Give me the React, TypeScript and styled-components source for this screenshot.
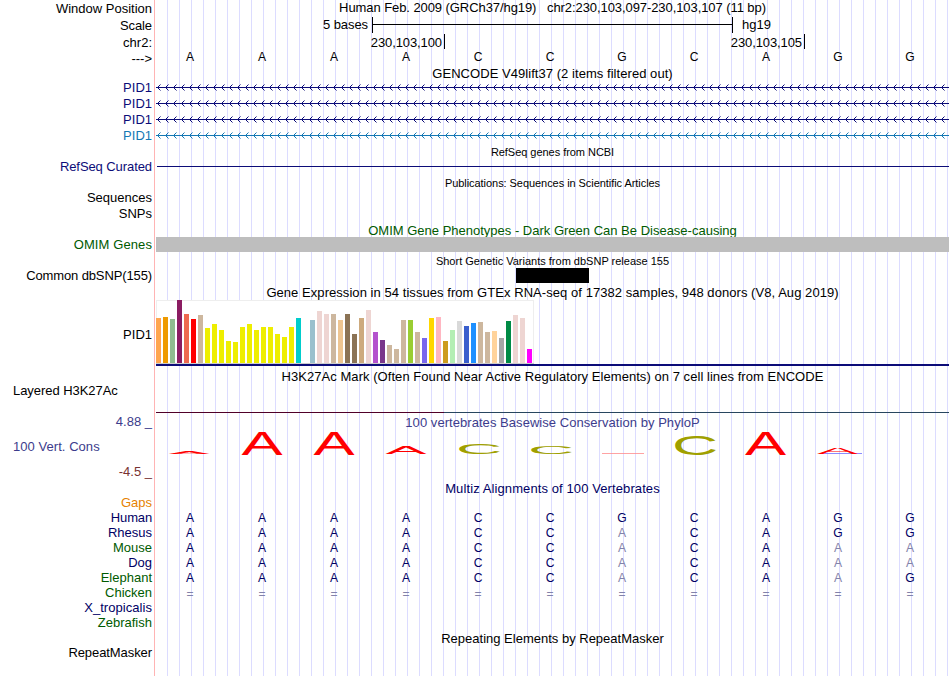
import type { ReactNode } from 'react';
import styled, { createGlobalStyle } from 'styled-components';

const NAVY = '#0c0c78';
const BASE = '#000064';
const GREEN = '#005a00';
const CONS = '#3c3c8c';

const GlobalStyle = createGlobalStyle`
  * {
    box-sizing: border-box;
  }
  body {
    margin: 0;
    background: #fff;
    overflow: hidden;
  }
`;

const Browser = styled.main`
  width: 950px;
  height: 676px;
  overflow: hidden;
  font: 13px/15px 'Liberation Sans', Arial, sans-serif;
  color: #000;
  white-space: pre;
  background:
    linear-gradient(#ffb4b4, #ffb4b4) 154px 0 / 1px 100% no-repeat,
    linear-gradient(#fff, #fff) 0 0 / 167px 100% no-repeat,
    linear-gradient(90deg, #dcdcff 1px, transparent 1px) 167px 0 / 12px 100%;
`;

const Row = styled.div<{ $height: number }>`
  display: grid;
  grid-template-columns: 152px 793px;
  column-gap: 4px;
  height: ${(p) => p.$height}px;
`;

const Label = styled.div<{ $color?: string; $top?: number; $left?: boolean; $spacing?: number }>`
  padding-top: ${(p) => p.$top ?? 0}px;
  padding-left: 13px;
  text-align: ${(p) => (p.$left ? 'left' : 'right')};
  color: ${(p) => p.$color ?? '#000'};
  letter-spacing: ${(p) => p.$spacing ?? 0}px;
`;

const Data = styled.div`
  min-width: 0;
`;

const Title = styled.div<{ $color?: string; $top?: number; $small?: boolean; $spacing?: number }>`
  padding-top: ${(p) => p.$top ?? 0}px;
  text-align: center;
  font-size: ${(p) => (p.$small ? 11 : 13)}px;
  color: ${(p) => p.$color ?? '#000'};
  letter-spacing: ${(p) => p.$spacing ?? 0}px;
`;

const ScaleBar = styled.div`
  display: grid;
  grid-template-columns: 212px 361px auto;
  column-gap: 4px;
  & > :first-child {
    text-align: right;
    letter-spacing: -0.08px;
  }
  & > :last-child {
    padding-left: 5px;
  }
`;

const Ruler = styled.div`
  height: 16px;
  border: solid #000;
  border-width: 0 1px;
  background: linear-gradient(#000, #000) 0 7px / 100% 1px no-repeat;
`;

const Coordinates = styled.div`
  display: grid;
  grid-template-columns: 289px 360px;
`;

const Coordinate = styled.div`
  height: 15px;
  padding: 1px 2px 0 0;
  border-right: 1px solid #000;
  text-align: right;
  letter-spacing: -0.1px;
`;

const Bases = styled.div<{ $top?: number }>`
  display: grid;
  grid-template-columns: repeat(11, 72.05px);
  margin-left: -2px;
  padding-top: ${(p) => p.$top ?? 0}px;
  text-align: center;
`;

const Base = styled.span<{ $color: string }>`
  color: ${(p) => p.$color};
  transform: scaleX(0.93);
`;

const Strand = styled.svg`
  display: block;
  width: 793px;
  height: 15px;
`;

const GeneLine = styled.div`
  height: 1px;
  margin: 7px 0 0 1px;
  background: ${NAVY};
`;

const OmimBar = styled.div`
  height: 15px;
  background: #bebebe;
`;

const Variant = styled.div`
  width: 73px;
  height: 15px;
  margin-left: 360px;
  background: #000;
`;

const Expression = styled.div`
  height: 66px;
  border-bottom: 2px solid ${NAVY};
`;

const Tissues = styled.div`
  display: flex;
  align-items: flex-end;
  gap: 2px;
  width: 378px;
  height: 64px;
  background: #fff;
  box-shadow: inset 0 1px #eee, inset -1px 0 #eee, inset 1px 0 #eee;
  border-bottom: 1px solid #ccc;
`;

const Tissue = styled.div<{ $height: number; $color: string }>`
  width: 5px;
  height: ${(p) => p.$height}px;
  background: ${(p) => p.$color};
`;

const HistoneLine = styled.div`
  height: 1px;
  margin-top: 29px;
  background: linear-gradient(90deg, #500028 288px, #28465f 288px);
`;

const Logo = styled.svg`
  display: block;
  width: 72px;
  height: 30px;
  overflow: visible;
`;

const tissues: [number, string][] = [
  [45, '#ffa54f'],
  [46, '#ee9a00'],
  [44, '#8fbc8f'],
  [63, '#8b1c62'],
  [49, '#ee6a50'],
  [44, '#ff0000'],
  [48, '#cdb79e'],
  ...[35, 39, 33, 22, 21, 36, 39, 33, 36, 36, 29, 26, 36].map(
    (height): [number, string] => [height, '#eeee00'],
  ),
  [45, '#00cdcd'],
  [0, '#ee82ee'],
  [43, '#9ac0cd'],
  [52, '#eed5d2'],
  [49, '#eed5d2'],
  [49, '#cdb79e'],
  [43, '#eec591'],
  [49, '#8b7355'],
  [29, '#8b7355'],
  [45, '#cdaa7d'],
  [53, '#eed5d2'],
  [31, '#b452cd'],
  [23, '#7a378b'],
  [18, '#cdb79e'],
  [14, '#cdb79e'],
  [43, '#cdb79e'],
  [43, '#9acd32'],
  [31, '#cdb79e'],
  [25, '#7a67ee'],
  [45, '#ffd700'],
  [46, '#ffb6c1'],
  [22, '#cd9b1d'],
  [33, '#b4eeb4'],
  [42, '#d9d9d9'],
  [37, '#3a5fcd'],
  [40, '#1e90ff'],
  [41, '#cdb79e'],
  [31, '#cdb79e'],
  [32, '#ffd39b'],
  [25, '#a6a6a6'],
  [42, '#008b45'],
  [48, '#eed5d2'],
  [45, '#eed5d2'],
  [14, '#ff00ff'],
];

// x is the centre inside the 72px base column, height is in pixels
const logos = [
  { letter: 'A', x: 35, height: 3, bottom: 23 },
  { letter: 'A', x: 36, height: 23, bottom: 24 },
  { letter: 'A', x: 36, height: 23, bottom: 24 },
  { letter: 'A', x: 36, height: 8, bottom: 23 },
  { letter: 'C', x: 37, height: 11, bottom: 23 },
  { letter: 'C', x: 37, height: 8, bottom: 23 },
  { letter: '', x: 36, height: 0, bottom: 23, line: '#ff8c8c', lineX: 16 },
  { letter: 'C', x: 37, height: 19, bottom: 24 },
  { letter: 'A', x: 35.5, height: 23, bottom: 24 },
  { letter: 'A', x: 35.5, height: 6, bottom: 23, line: '#6e6eff', lineX: 18 },
  { letter: '', x: 36, height: 0, bottom: 23 },
];

const HUMAN = 'AAAACCGCAGG';

const species = [
  { name: 'Human', color: BASE, bases: HUMAN, spacing: -0.15 },
  { name: 'Rhesus', color: BASE, bases: 'AAAACCACAGG' },
  { name: 'Mouse', color: GREEN, bases: 'AAAACCACAAA' },
  { name: 'Dog', color: BASE, bases: 'AAAACCACAAA' },
  { name: 'Elephant', color: GREEN, bases: 'AAAACCACAAG' },
  { name: 'Chicken', color: GREEN, bases: '===========', top: 1 },
  { name: 'X_tropicalis', color: BASE, bases: '', spacing: 0.05 },
  { name: 'Zebrafish', color: GREEN, bases: '' },
];

const genes = [
  { color: NAVY },
  { color: NAVY },
  { color: NAVY },
  { color: '#1478b4' },
];

type TrackProps = {
  height: number;
  label?: ReactNode;
  children?: ReactNode;
};

const Track = ({ height, label, children }: TrackProps) => (
  <Row $height={height}>
    {label ?? <Label />}
    <Data>{children}</Data>
  </Row>
);

const GeneStrand = ({ color }: { color: string }) => (
  <Strand viewBox="0 0 793 15" fill={color} shapeRendering="crispEdges">
    <path d="M0 7h793v1H0z" />
    {Array.from({ length: 99 }, (_, i) => (
      <g key={i} transform={`translate(${i * 8} 0)`}>
        <path d="M2 6h1v1h-1z M2 8h1v1h-1z M3 5h1v1h-1z M3 9h1v1h-1z" />
        <path d="M4 4h1v1h-1z M4 10h1v1h-1z" opacity={0.5} />
      </g>
    ))}
  </Strand>
);

const SequenceLogo = ({ letter, x, height, bottom, line, lineX = 0 }: (typeof logos)[number]) => {
  const isA = letter === 'A';
  const scaleX = isA ? 6.17 : 6.4;
  const scaleY = height / (isA ? 6.88 : 7.08);
  return (
    <Logo viewBox="0 0 72 30">
      {line && <path d={`M${lineX} 22.5h42`} stroke={line} strokeWidth={0.8} />}
      {letter && (
        <text
          transform={`translate(${x} ${bottom}) scale(${scaleX} ${scaleY})`}
          y={isA ? 0 : -0.1}
          fontSize={10}
          textAnchor="middle"
          fill={isA ? '#ff0000' : '#a0a000'}
        >
          {letter}
        </text>
      )}
    </Logo>
  );
};

const App = () => {
  return (
    <>
      <GlobalStyle />
      <Browser>
        <Track height={17} label={<Label $top={1}>Window Position</Label>}>
          <Title $spacing={-0.075}>
            {'Human Feb. 2009 (GRCh37/hg19)   chr2:230,103,097-230,103,107 (11 bp)'}
          </Title>
        </Track>
        <Track height={17} label={<Label $top={1} $spacing={-0.1}>Scale</Label>}>
          <ScaleBar>
            <span>5 bases</span>
            <Ruler />
            <span>hg19</span>
          </ScaleBar>
        </Track>
        <Track height={15} label={<Label $top={1}>chr2:</Label>}>
          <Coordinates>
            <Coordinate>230,103,100</Coordinate>
            <Coordinate>230,103,105</Coordinate>
          </Coordinates>
        </Track>
        <Track height={16} label={<Label $top={2}>{'--->'}</Label>}>
          <Bases>
            {HUMAN.split('').map((base, i) => (
              <Base key={i} $color="#000">
                {base}
              </Base>
            ))}
          </Bases>
        </Track>

        <Track height={15}>
          <Title $top={1} $spacing={0.05}>
            GENCODE V49lift37 (2 items filtered out)
          </Title>
        </Track>
        {genes.map(({ color }, i) => (
          <Track key={i} height={16} label={<Label $color={color}>PID1</Label>}>
            <GeneStrand color={color} />
          </Track>
        ))}

        <Track height={15}>
          <Title $small $top={1} $spacing={-0.04}>
            RefSeq genes from NCBI
          </Title>
        </Track>
        <Track
          height={16}
          label={
            <Label $color={NAVY} $spacing={-0.08}>
              RefSeq Curated
            </Label>
          }
        >
          <GeneLine />
        </Track>

        <Track height={15}>
          <Title $small $top={1} $spacing={-0.055}>
            Publications: Sequences in Scientific Articles
          </Title>
        </Track>
        <Track height={16} label={<Label>Sequences</Label>} />
        <Track height={16} label={<Label>SNPs</Label>} />

        <Track height={15}>
          <Title $top={1} $color={GREEN}>
            OMIM Gene Phenotypes - Dark Green Can Be Disease-causing
          </Title>
        </Track>
        <Track
          height={15}
          label={
            <Label $color={GREEN} $spacing={0.1}>
              OMIM Genes
            </Label>
          }
        >
          <OmimBar />
        </Track>

        <Track height={16}>
          <Title $small $top={2}>
            Short Genetic Variants from dbSNP release 155
          </Title>
        </Track>
        <Track height={15} label={<Label $spacing={-0.12}>Common dbSNP(155)</Label>}>
          <Variant />
        </Track>

        <Track height={17}>
          <Title $top={2} $spacing={0.055}>
            Gene Expression in 54 tissues from GTEx RNA-seq of 17382 samples, 948 donors (V8, Aug 2019)
          </Title>
        </Track>
        <Track height={66} label={<Label $top={27}>PID1</Label>}>
          <Expression>
            <Tissues>
              {tissues.map(([height, color], i) => (
                <Tissue key={i} $height={height} $color={color} />
              ))}
            </Tissues>
          </Expression>
        </Track>

        <Track height={17}>
          <Title $top={3} $spacing={0.05}>
            H3K27Ac Mark (Often Found Near Active Regulatory Elements) on 7 cell lines from ENCODE
          </Title>
        </Track>
        <Track
          height={30}
          label={
            <Label $left $spacing={-0.05}>
              Layered H3K27Ac
            </Label>
          }
        >
          <HistoneLine />
        </Track>

        <Track height={18} label={<Label $top={1} $color={CONS}>4.88 _</Label>}>
          <Title $top={2} $color={CONS} $spacing={0.05}>
            100 vertebrates Basewise Conservation by PhyloP
          </Title>
        </Track>
        <Track
          height={30}
          label={
            <Label $left $top={8} $color={CONS} $spacing={0.05}>
              100 Vert. Cons
            </Label>
          }
        >
          <Bases>
            {logos.map((logo, i) => (
              <SequenceLogo key={i} {...logo} />
            ))}
          </Bases>
        </Track>
        <Track height={19} label={<Label $top={3} $color="#783232">-4.5 _</Label>} />

        <Track height={15}>
          <Title $top={1} $color={BASE} $spacing={0.1}>
            Multiz Alignments of 100 Vertebrates
          </Title>
        </Track>
        <Track height={15} label={<Label $color="#e68200">Gaps</Label>} />
        {species.map(({ name, color, bases, top, spacing }) => (
          <Track
            key={name}
            height={15}
            label={
              <Label $color={color} $spacing={spacing}>
                {name}
              </Label>
            }
          >
            <Bases $top={top}>
              {bases.split('').map((base, i) => (
                <Base key={i} $color={base === HUMAN[i] ? BASE : '#8282aa'}>
                  {base}
                </Base>
              ))}
            </Bases>
          </Track>
        ))}

        <Track height={15}>
          <Title $top={1}>Repeating Elements by RepeatMasker</Title>
        </Track>
        <Track height={31} label={<Label $spacing={-0.08}>RepeatMasker</Label>} />
      </Browser>
    </>
  );
};

export default App;
